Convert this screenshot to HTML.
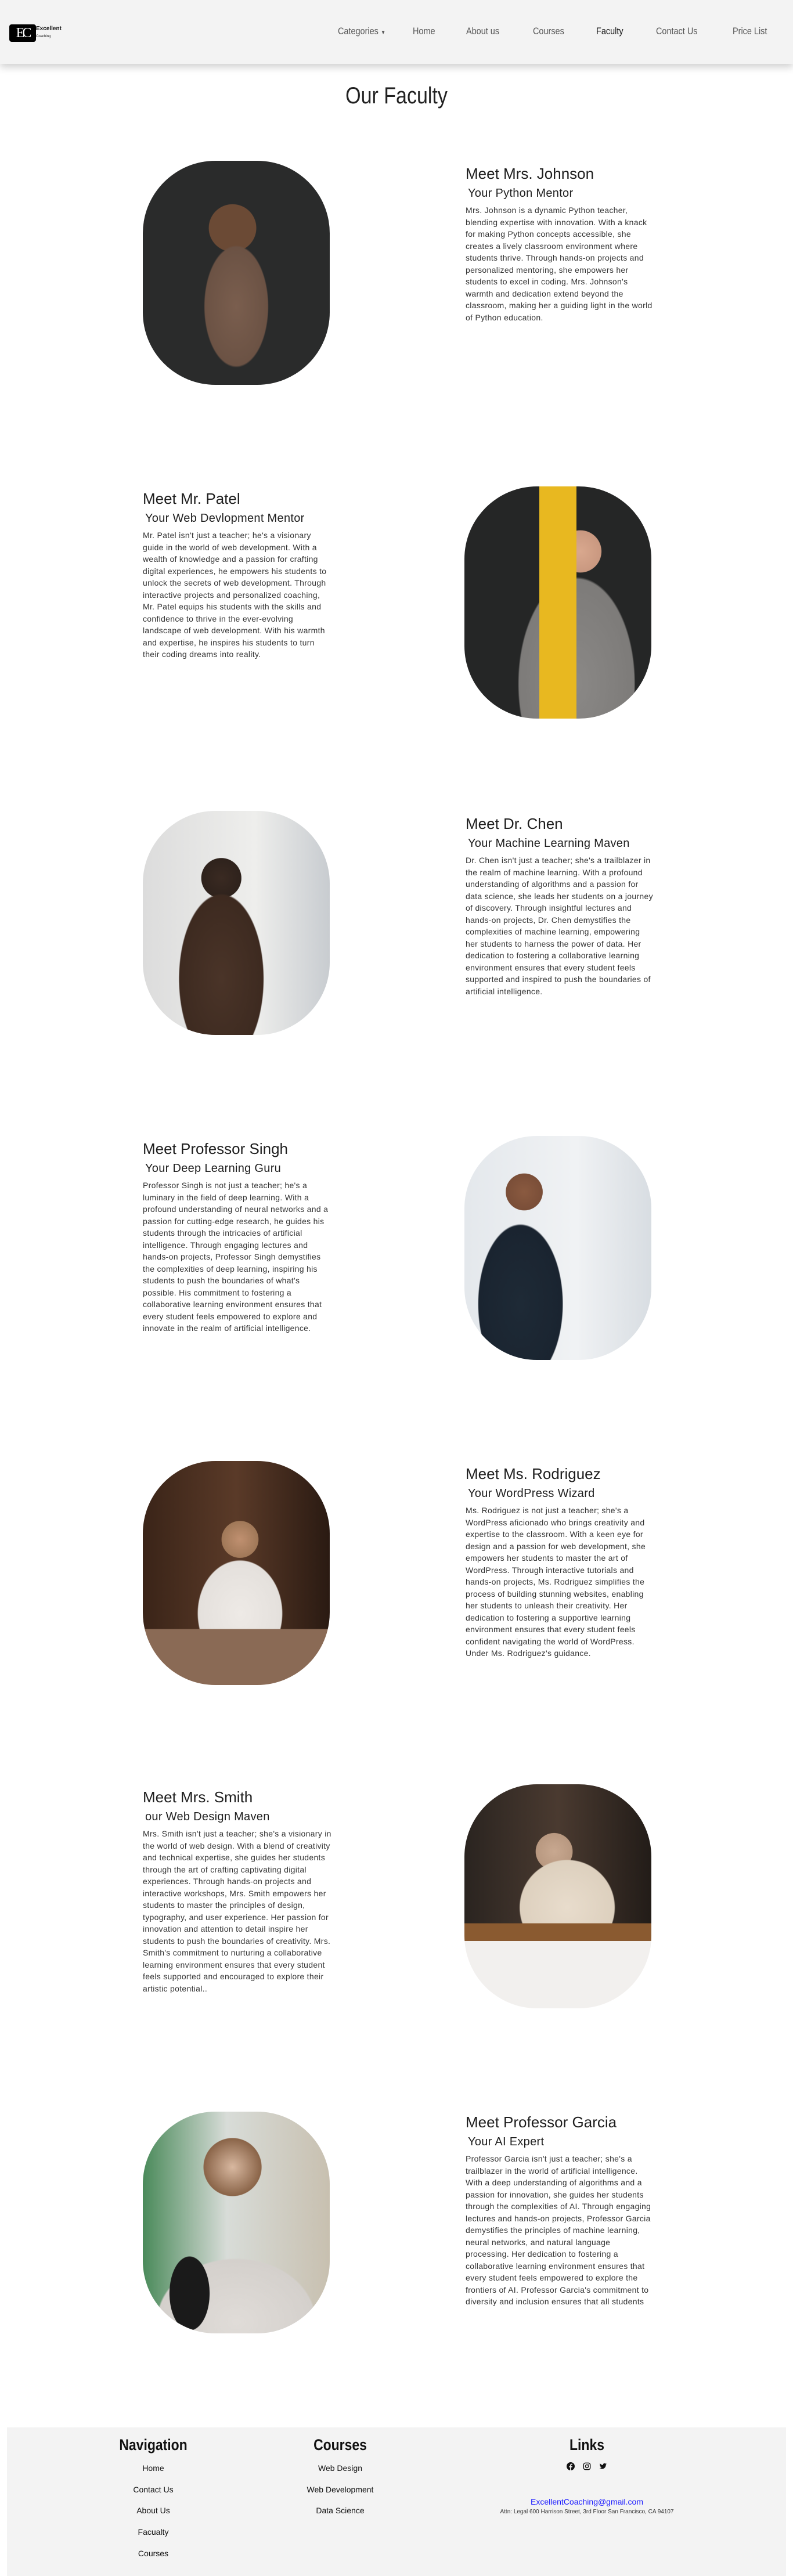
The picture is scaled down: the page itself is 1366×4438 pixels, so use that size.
<!DOCTYPE html>
<html><head><meta charset="utf-8">
<style>
*{margin:0;padding:0;box-sizing:border-box}
html,body{width:1366px;height:4438px;background:#fff;overflow:hidden}
body{position:relative;font-family:"Liberation Sans",sans-serif;color:#222}
.nav{position:absolute;left:0;top:0;width:1366px;height:110px;background:#f3f3f3;box-shadow:0 6px 12px rgba(0,0,0,.18)}
.nav a{position:absolute;top:44px;font-size:17px;color:#555;text-decoration:none;white-space:nowrap;transform:scaleX(.85);transform-origin:left}
.logo{position:absolute;left:16px;top:42px;width:46px;height:30px;background:#000;border-radius:4px;color:#fff;font-family:"Liberation Serif",serif;font-size:24px;line-height:30px;text-align:center;letter-spacing:-4px}
.lt1{position:absolute;left:62px;top:44px;font-size:10px;font-weight:bold;color:#111}
.lt2{position:absolute;left:62px;top:60px;font-size:6px;color:#111}
h1{position:absolute;left:0;width:1366px;top:143px;text-align:center;font-weight:normal;font-size:40px;color:#222;transform:scaleX(.85)}
.img{position:absolute;width:322px;height:386px;border-radius:125px;overflow:hidden}
.t{position:absolute;width:325px}
.t h2{font-weight:normal;font-size:26px;line-height:30px;color:#1e1e1e;height:36px}
.t h3{font-weight:normal;font-size:20px;line-height:26px;color:#1e1e1e;padding-left:4px;height:32px;letter-spacing:.3px}
.t p{font-size:14px;line-height:20.5px;color:#333;letter-spacing:.3px}
.foot{position:absolute;left:12px;top:4182px;width:1342px;height:256px;background:#f3f3f3}
.fc{position:absolute;text-align:center}
.fc h4{font-size:27px;font-weight:bold;color:#111;line-height:32px;transform:scaleX(.85)}
.fc div{font-size:14px;color:#111;height:36.7px;line-height:20px}
</style></head><body>
<div class="nav">
 <div class="logo">EC</div><div class="lt1">Excellent</div><div class="lt2">Coaching</div>
 <a style="left:582px">Categories <span style="font-size:10px">▼</span></a>
 <a style="left:711px">Home</a>
 <a style="left:803px">About us</a>
 <a style="left:918px">Courses</a>
 <a style="left:1027px;color:#111">Faculty</a>
 <a style="left:1130px">Contact Us</a>
 <a style="left:1262px">Price List</a>
</div>
<h1>Our Faculty</h1>

<div class="img" style="left:246px;top:277px;background:radial-gradient(ellipse 90px 170px at 50% 65%,#7a5e4e 0,#6b5244 60%,transparent 62%),radial-gradient(circle 45px at 48% 30%,#6b4a35 0,#6b4a35 90%,transparent 92%),#2a2b2b"></div>
<div class="t" style="left:802px;top:284px"><h2>Meet Mrs. Johnson</h2><h3>Your Python Mentor</h3><p>Mrs. Johnson is a dynamic Python teacher, blending expertise with innovation. With a knack for making Python concepts accessible, she creates a lively classroom environment where students thrive. Through hands-on projects and personalized mentoring, she empowers her students to excel in coding. Mrs. Johnson's warmth and dedication extend beyond the classroom, making her a guiding light in the world of Python education.</p></div>

<div class="img" style="left:800px;top:838px;height:400px;background:linear-gradient(90deg,transparent 40%,#e8b820 40%,#e8b820 60%,transparent 60%),radial-gradient(ellipse 110px 200px at 60% 85%,#8a8886 0,#7d7b79 90%,transparent 92%),radial-gradient(circle 40px at 62% 28%,#d9a88e 0,#c99880 90%,transparent 92%),#252626"></div>
<div class="t" style="left:246px;top:844px"><h2>Meet Mr. Patel</h2><h3>Your Web Devlopment Mentor</h3><p>Mr. Patel isn't just a teacher; he's a visionary guide in the world of web development. With a wealth of knowledge and a passion for crafting digital experiences, he empowers his students to unlock the secrets of web development. Through interactive projects and personalized coaching, Mr. Patel equips his students with the skills and confidence to thrive in the ever-evolving landscape of web development. With his warmth and expertise, he inspires his students to turn their coding dreams into reality.</p></div>

<div class="img" style="left:246px;top:1397px;background:radial-gradient(ellipse 80px 160px at 42% 75%,#4a3428 0,#3d2a20 90%,transparent 92%),radial-gradient(circle 38px at 42% 30%,#3a2a22 0,#2e221c 90%,transparent 92%),linear-gradient(90deg,#dcdcdc,#eeeeec 60%,#c8ccd0)"></div>
<div class="t" style="left:802px;top:1404px"><h2>Meet Dr. Chen</h2><h3>Your Machine Learning Maven</h3><p>Dr. Chen isn't just a teacher; she's a trailblazer in the realm of machine learning. With a profound understanding of algorithms and a passion for data science, she leads her students on a journey of discovery. Through insightful lectures and hands-on projects, Dr. Chen demystifies the complexities of machine learning, empowering her students to harness the power of data. Her dedication to fostering a collaborative learning environment ensures that every student feels supported and inspired to push the boundaries of artificial intelligence.</p></div>

<div class="img" style="left:800px;top:1957px;background:radial-gradient(ellipse 80px 150px at 30% 75%,#1e2a36 0,#1a2430 90%,transparent 92%),radial-gradient(circle 35px at 32% 25%,#8a5a40 0,#7a4e38 90%,transparent 92%),linear-gradient(90deg,#e4e8ec,#f0f2f4 60%,#d8dde2)"></div>
<div class="t" style="left:246px;top:1964px"><h2>Meet Professor Singh</h2><h3>Your Deep Learning Guru</h3><p>Professor Singh is not just a teacher; he's a luminary in the field of deep learning. With a profound understanding of neural networks and a passion for cutting-edge research, he guides his students through the intricacies of artificial intelligence. Through engaging lectures and hands-on projects, Professor Singh demystifies the complexities of deep learning, inspiring his students to push the boundaries of what's possible. His commitment to fostering a collaborative learning environment ensures that every student feels empowered to explore and innovate in the realm of artificial intelligence.</p></div>

<div class="img" style="left:246px;top:2517px;background:linear-gradient(180deg,transparent 75%,#8a6a55 75%),radial-gradient(ellipse 80px 100px at 52% 68%,#eeeae6 0,#e4e0dc 90%,transparent 92%),radial-gradient(circle 35px at 52% 35%,#c09070 0,#a07858 90%,transparent 92%),linear-gradient(90deg,#3a2418,#5a3a28 50%,#2a1a12)"></div>
<div class="t" style="left:802px;top:2524px"><h2>Meet Ms. Rodriguez</h2><h3>Your WordPress Wizard</h3><p>Ms. Rodriguez is not just a teacher; she's a WordPress aficionado who brings creativity and expertise to the classroom. With a keen eye for design and a passion for web development, she empowers her students to master the art of WordPress. Through interactive tutorials and hands-on projects, Ms. Rodriguez simplifies the process of building stunning websites, enabling her students to unleash their creativity. Her dedication to fostering a supportive learning environment ensures that every student feels confident navigating the world of WordPress. Under Ms. Rodriguez's guidance.</p></div>

<div class="img" style="left:800px;top:3074px;background:linear-gradient(180deg,transparent 70%,#f2f0ee 70%),linear-gradient(180deg,transparent 62%,#8a5a30 62%,#8a5a30 70%,transparent 70%),radial-gradient(ellipse 90px 90px at 55% 55%,#e8dccc 0,#ddd0be 90%,transparent 92%),radial-gradient(circle 35px at 48% 30%,#c8a890 0,#b89880 90%,transparent 92%),linear-gradient(90deg,#2a2420,#4a3a30 50%,#221c18)"></div>
<div class="t" style="left:246px;top:3081px"><h2>Meet Mrs. Smith</h2><h3>our Web Design Maven</h3><p>Mrs. Smith isn't just a teacher; she's a visionary in the world of web design. With a blend of creativity and technical expertise, she guides her students through the art of crafting captivating digital experiences. Through hands-on projects and interactive workshops, Mrs. Smith empowers her students to master the principles of design, typography, and user experience. Her passion for innovation and attention to detail inspire her students to push the boundaries of creativity. Mrs. Smith's commitment to nurturing a collaborative learning environment ensures that every student feels supported and encouraged to explore their artistic potential..</p></div>

<div class="img" style="left:246px;top:3638px;height:382px;background:radial-gradient(ellipse 38px 70px at 25% 82%,#1a1a1a 0,#1a1a1a 90%,transparent 92%),radial-gradient(ellipse 150px 120px at 50% 95%,#e0dcd8 0,#d4d0cc 90%,transparent 92%),radial-gradient(circle 55px at 48% 25%,#d8b8a0 0,#8a6448 90%,transparent 92%),linear-gradient(90deg,#4a8a5a,#d8dcd8 45%,#c8c0b0)"></div>
<div class="t" style="left:802px;top:3641px"><h2>Meet Professor Garcia</h2><h3>Your AI Expert</h3><p>Professor Garcia isn't just a teacher; she's a trailblazer in the world of artificial intelligence. With a deep understanding of algorithms and a passion for innovation, she guides her students through the complexities of AI. Through engaging lectures and hands-on projects, Professor Garcia demystifies the principles of machine learning, neural networks, and natural language processing. Her dedication to fostering a collaborative learning environment ensures that every student feels empowered to explore the frontiers of AI. Professor Garcia's commitment to diversity and inclusion ensures that all students</p></div>

<div class="foot"></div>
<div class="fc" style="left:164px;width:200px;top:4196px"><h4>Navigation</h4><div style="margin-top:14px">Home</div><div>Contact Us</div><div>About Us</div><div>Facualty</div><div>Courses</div></div>
<div class="fc" style="left:486px;width:200px;top:4196px"><h4>Courses</h4><div style="margin-top:14px">Web Design</div><div>Web Development</div><div>Data Science</div></div>
<div class="fc" style="left:811px;width:400px;top:4196px"><h4>Links</h4>
 <div style="margin-top:10px;height:auto;font-size:14px">
  <svg width="14" height="14" viewBox="0 0 16 16" style="vertical-align:middle;margin:0 5px"><circle cx="8" cy="8" r="8" fill="#111"/><path d="M9 16V10h2l.3-2.3H9V6.3c0-.6.2-1.1 1.1-1.1h1.2V3.1C11 3 10.4 3 9.8 3 8.2 3 7 4 7 5.8v1.9H5V10h2v6z" fill="#f3f3f3"/></svg>
  <svg width="14" height="14" viewBox="0 0 16 16" style="vertical-align:middle;margin:0 5px"><rect x="1.5" y="1.5" width="13" height="13" rx="3.5" fill="none" stroke="#111" stroke-width="1.6"/><circle cx="8" cy="8" r="3" fill="none" stroke="#111" stroke-width="1.6"/><circle cx="11.8" cy="4.2" r=".9" fill="#111"/></svg>
  <svg width="14" height="14" viewBox="0 0 16 16" style="vertical-align:middle;margin:0 5px"><path d="M15 3.3c-.5.2-1.1.4-1.7.5.6-.4 1.1-1 1.3-1.6-.6.3-1.2.6-1.9.7A2.9 2.9 0 0 0 7.8 5.5 8.3 8.3 0 0 1 1.8 2.4a2.9 2.9 0 0 0 .9 3.9c-.5 0-.9-.2-1.3-.4 0 1.4 1 2.6 2.3 2.9-.4.1-.9.1-1.3 0 .4 1.2 1.5 2 2.7 2A5.9 5.9 0 0 1 .8 12c1.3.8 2.8 1.3 4.4 1.3 5.3 0 8.2-4.4 8.2-8.2v-.4c.6-.4 1.1-.9 1.5-1.5z" fill="#111"/></svg>
 </div>
 <div style="margin-top:42px;color:#1a1aff;height:20px;font-size:14px">ExcellentCoaching@gmail.com</div>
 <div style="font-size:10px;color:#333;height:16px;line-height:16px">Attn: Legal 600 Harrison Street, 3rd Floor San Francisco, CA 94107</div>
</div>
</body></html>
